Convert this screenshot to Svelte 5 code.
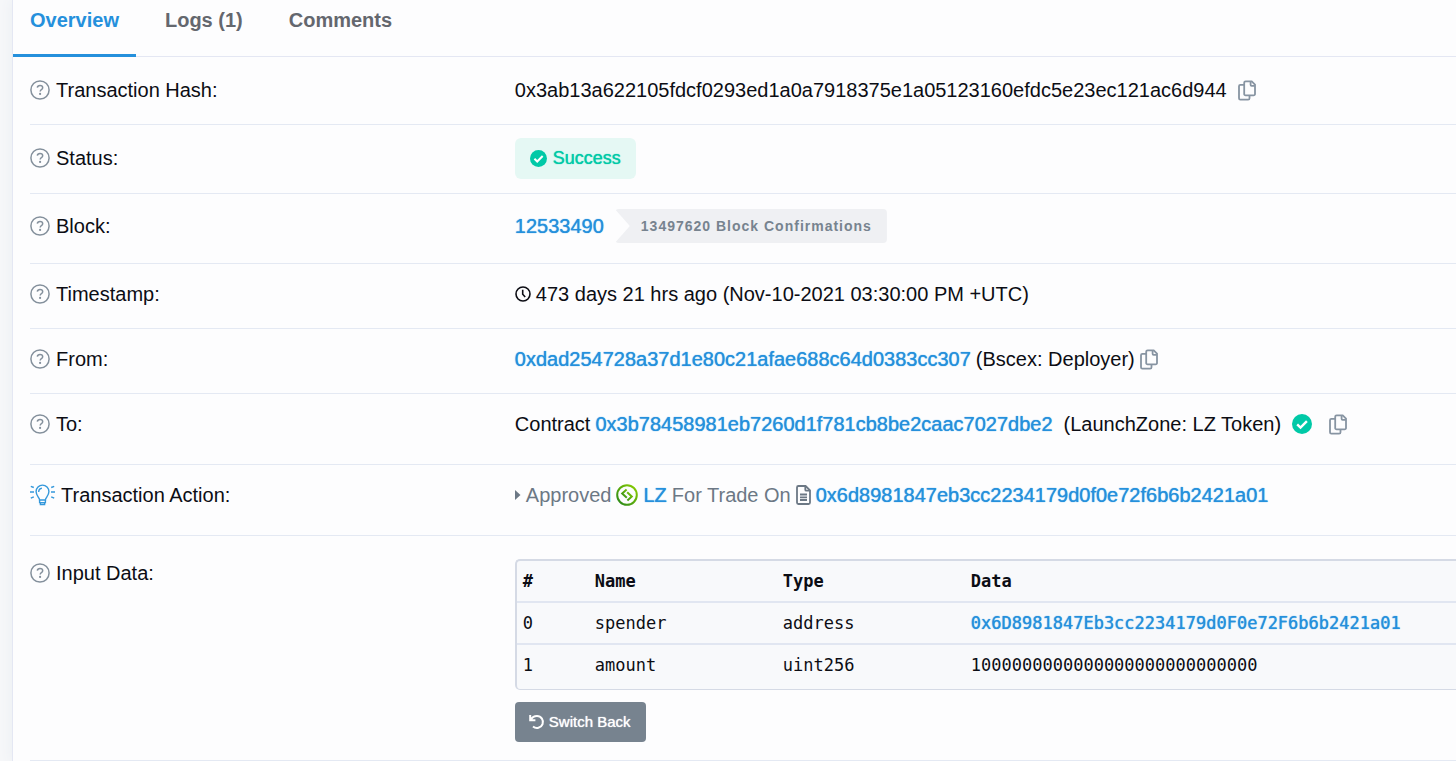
<script>
  const tabs = [
    { label: 'Overview', active: true },
    { label: 'Logs (1)', active: false },
    { label: 'Comments', active: false }
  ];

  const params = [
    { index: 0, name: 'spender', type: 'address', data: '0x6D8981847Eb3cc2234179d0F0e72F6b6b2421a01', link: true },
    { index: 1, name: 'amount', type: 'uint256', data: '1000000000000000000000000000', link: false }
  ];
</script>

{#snippet help()}
  <svg class="help" viewBox="0 0 20 20" aria-hidden="true">
    <circle cx="10" cy="10" r="9.1" />
    <path d="M7.3 7.7C7.5 6.2 8.6 5.5 10 5.5c1.500 0 2.700.8 2.700 2.200 0 2-2.500 1.900-2.500 3.700" />
    <circle class="dot" cx="10.1" cy="13.9" r="1.1" />
  </svg>
{/snippet}

{#snippet copy()}
  <button class="copy" type="button" aria-label="Copy to clipboard">
    <svg viewBox="0 0 18 21" aria-hidden="true">
      <path d="M7.6 1.4h6.1l3.3 3.3v9.2a1.4 1.4 0 0 1-1.4 1.4h-8a1.4 1.4 0 0 1-1.4-1.4V2.8a1.4 1.4 0 0 1 1.4-1.4z" />
      <path d="M12.6 1.6v3.2a1 1 0 0 0 1 1h3.2" />
      <path d="M6.1 4.8H2.4A1.4 1.4 0 0 0 1 6.2v12a1.4 1.4 0 0 0 1.4 1.4h7.7a1.4 1.4 0 0 0 1.4-1.4v-2.7" />
    </svg>
  </button>
{/snippet}

{#snippet check()}
  <svg class="check" viewBox="0 0 20 20" aria-hidden="true">
    <circle cx="10" cy="10" r="10" />
    <path d="M5.2 10.4l3.3 3.2 6.4-6.5" />
  </svg>
{/snippet}

<main class="page">
  <section class="card">
    <nav class="tabs" aria-label="Transaction sections">
      {#each tabs as tab}
        <a href="#top" class:active={tab.active}>{tab.label}</a>
      {/each}
    </nav>

    <dl>
      <div class="row roomy">
        <dt>{@render help()}Transaction Hash:</dt>
        <dd>
          <span>0x3ab13a622105fdcf0293ed1a0a7918375e1a05123160efdc5e23ec121ac6d944</span>
          <span class="spaced">{@render copy()}</span>
        </dd>
      </div>

      <div class="row roomy">
        <dt>{@render help()}Status:</dt>
        <dd><span class="status">{@render check()}Success</span></dd>
      </div>

      <div class="row block">
        <dt>{@render help()}Block:</dt>
        <dd>
          <a href="#block">12533490</a>
          <span class="confirmations">13497620 Block Confirmations</span>
        </dd>
      </div>

      <div class="row">
        <dt>{@render help()}Timestamp:</dt>
        <dd>
          <svg class="clock" viewBox="0 0 16 16" aria-hidden="true">
            <circle cx="8" cy="8" r="7" />
            <path d="M7.7 3.8v4.4l2.5 2.8" />
          </svg>
          <span>473 days 21 hrs ago (Nov-10-2021 03:30:00 PM +UTC)</span>
        </dd>
      </div>

      <div class="row">
        <dt>{@render help()}From:</dt>
        <dd>
          <a href="#from">0xdad254728a37d1e80c21afae688c64d0383cc307</a>
          <span>(Bscex: Deployer)</span>
          {@render copy()}
        </dd>
      </div>

      <div class="row tall">
        <dt>{@render help()}To:</dt>
        <dd>
          <span>Contract</span>
          <a href="#to">0x3b78458981eb7260d1f781cb8be2caac7027dbe2</a>
          <span class="spaced">(LaunchZone: LZ Token)</span>
          <span class="verified">{@render check()}{@render copy()}</span>
        </dd>
      </div>

      <div class="row tall">
        <dt>
          <svg class="bulb" viewBox="0 0 25 22" aria-hidden="true">
            <path d="M9.6 16c0-2.5-3.5-3.9-3.5-8.5a6.4 6.4 0 0 1 12.8 0c0 4.6-3.5 6-3.5 8.5z" />
            <path d="M9.6 16v2.6h5.8V16M10.4 18.8v1.7h4.2v-1.7M8.7 8c0-2.1 1.2-3.6 3.2-3.8" />
            <path d="M.8 2.3l3 1.2M0 8h4M.8 14.1l3-1.3M24.2 2.3l-3 1.2M25 8h-4M24.2 14.1l-3-1.3" />
          </svg>Transaction Action:
        </dt>
        <dd class="muted">
          <svg class="caret" viewBox="0 0 6 10" aria-hidden="true"><path d="M0 0l5.5 5L0 10z" /></svg>
          <span>Approved</span>
          <svg class="token" viewBox="0 0 22 22" aria-hidden="true">
            <defs>
              <linearGradient id="token-green" x1="0" y1="1" x2="1" y2="0">
                <stop offset="0" stop-color="#25851b" />
                <stop offset="1" stop-color="#8ed000" />
              </linearGradient>
            </defs>
            <circle cx="11" cy="11" r="9.8" />
            <path d="M10.600 5.500L6.200 9.500l4.600 4.200M11.400 16.500l4.400-4-4.600-4.200" />
          </svg>
          <a href="#token">LZ</a>
          <span>For Trade On</span>
          <svg class="file" viewBox="0 0 15 20" aria-hidden="true">
            <path d="M2.4 1h7.2L14 5.4v12.2a1.4 1.4 0 0 1-1.4 1.4H2.4A1.4 1.4 0 0 1 1 17.6V2.4A1.4 1.4 0 0 1 2.4 1z" />
            <path d="M9.3 1.2v3.5a1 1 0 0 0 1 1h3.5M4 9.5h7M4 12.3h7M4 15h7" />
          </svg>
          <a href="#spender">0x6d8981847eb3cc2234179d0f0e72f6b6b2421a01</a>
        </dd>
      </div>

      <div class="row input">
        <dt>{@render help()}Input Data:</dt>
        <dd>
          <div class="decoded">
            <table>
              <thead>
                <tr>
                  <th class="index" scope="col">#</th>
                  <th class="field" scope="col">Name</th>
                  <th class="field" scope="col">Type</th>
                  <th scope="col">Data</th>
                </tr>
              </thead>
              <tbody>
                {#each params as p}
                  <tr>
                    <td>{p.index}</td>
                    <td>{p.name}</td>
                    <td>{p.type}</td>
                    <td>{#if p.link}<a href="#address">{p.data}</a>{:else}{p.data}{/if}</td>
                  </tr>
                {/each}
              </tbody>
            </table>
          </div>
          <button class="switch" type="button">
            <svg viewBox="0 0 16 16" aria-hidden="true">
              <path d="M1.2 1v5.200h5.200M2 5.600C3.200 3.300 5.400 2 8 2a6 6 0 1 1-4 10.500" />
            </svg>
            Switch Back
          </button>
        </dd>
      </div>
    </dl>
  </section>
</main>

<style>
  :global(body) {
    margin: 0;
    background: #f6f7f9;
  }

  .page {
    padding-left: 12px;
    overflow: hidden;
    font-family: 'Liberation Sans', Arial, Helvetica, sans-serif;
    font-size: 20px;
    line-height: 28px;
    color: #0c0d14;
  }

  .card {
    background: #fdfdfe;
    border-left: 1px solid #e4e7f3;
    box-shadow: 0 0 12px #e9edf2;
  }

  a {
    color: #2590dc;
    text-decoration: none;
  }

  dd a,
  .status,
  .switch {
    text-shadow: 0 0 1px currentColor;
  }

  svg {
    flex: none;
    fill: none;
    stroke: currentColor;
  }

  .tabs {
    display: flex;
    gap: 12px;
    border-bottom: 1px solid #e4e7f3;
  }

  .tabs a {
    padding: 6px 17px 20px;
    margin-bottom: -1px;
    border-bottom: 3px solid transparent;
    color: #64676e;
    font-weight: bold;
  }

  .tabs a.active {
    color: #2590dc;
    border-color: #2590dc;
  }

  dl {
    margin: 0;
    padding-left: 17px;
  }

  .row {
    display: grid;
    grid-template-columns: 34% minmax(0, 1fr);
    align-items: start;
    padding: 16px 0 20px;
    border-bottom: 1px solid #e4e9f3;
  }

  .row.roomy {
    padding: 19px 0 20px;
  }

  .row.block {
    padding: 18px 0 23px;
  }

  .row.tall {
    padding: 16px 0 26px;
  }

  .row.input {
    padding: 23px 0 18px;
  }

  dt,
  dd {
    display: flex;
    align-items: center;
    gap: 6px;
    margin: 0;
    min-height: 28px;
    white-space: nowrap;
  }

  dd {
    gap: 5px;
  }

  .help {
    width: 20px;
    height: 20px;
    color: #84909c;
    stroke-width: 1.5;
  }

  .help .dot {
    fill: currentColor;
    stroke: none;
  }

  .copy {
    display: flex;
    padding: 0;
    border: 0;
    background: none;
    color: #8794a2;
    cursor: pointer;
  }

  .copy svg {
    width: 18px;
    height: 21px;
    stroke-width: 1.8;
  }

  .spaced {
    margin-left: 6px;
  }

  .check {
    width: 20px;
    height: 20px;
    color: #00c9a7;
  }

  .check circle {
    fill: currentColor;
    stroke: none;
  }

  .check path {
    stroke: #fff;
    stroke-width: 2.4;
  }

  .status {
    display: flex;
    align-items: center;
    gap: 6px;
    margin: -6px 0;
    padding: 6px 15px;
    border-radius: 6px;
    background: #e5f8f4;
    color: #00c9a7;
    font-size: 18px;
    line-height: 29px;
  }

  .status .check {
    width: 17px;
    height: 17px;
  }

  .confirmations {
    margin: -3px 0 -3px 6px;
    padding: 3px 15px 3px 26px;
    border-radius: 4px;
    background: #eff0f3;
    clip-path: polygon(0 0, 100% 0, 100% 100%, 0 100%, 15px 50%);
    color: #77838f;
    font-size: 14px;
    font-weight: bold;
    letter-spacing: 1px;
  }

  .clock {
    width: 16px;
    height: 16px;
    stroke-width: 1.6;
  }

  .verified {
    display: flex;
    align-items: center;
    gap: 17px;
    margin-left: 6px;
  }

  .bulb {
    width: 25px;
    height: 22px;
    color: #3498db;
    stroke-width: 1.4;
  }

  .muted {
    color: #6c7885;
  }

  .caret {
    width: 6px;
    height: 10px;
  }

  .caret path {
    fill: currentColor;
    stroke: none;
  }

  .token {
    width: 22px;
    height: 22px;
    stroke: url(#token-green);
    stroke-width: 2;
  }

  .file {
    width: 15px;
    height: 20px;
    stroke-width: 1.8;
  }

  .input dd {
    flex-direction: column;
    align-items: flex-start;
    gap: 12px;
  }

  .decoded {
    box-sizing: border-box;
    width: 100%;
    padding-bottom: 4px;
    border: 2px solid #d5dae5;
    border-width: 2px 0 1px 2px;
    border-radius: 5px 0 0 5px;
    background: #f8f9fb;
    overflow: hidden;
  }

  table {
    width: 100%;
    table-layout: fixed;
    border-collapse: collapse;
    font-family: 'DejaVu Sans Mono', monospace;
    font-size: 17px;
    line-height: 24px;
  }

  th,
  td {
    padding: 8px 6px;
    text-align: left;
  }

  tbody tr {
    border-top: 2px solid #e1e6f1;
  }

  .index {
    width: 60px;
  }

  .field {
    width: 176px;
  }

  .switch {
    display: flex;
    align-items: center;
    gap: 4px;
    padding: 6px 15px 6px 14px;
    border: 0;
    border-radius: 4px;
    background: #77838f;
    color: #fff;
    font-family: inherit;
    font-size: 15px;
    line-height: 28px;
    cursor: pointer;
  }

  .switch svg {
    width: 16px;
    height: 16px;
    stroke-width: 2;
  }
</style>
